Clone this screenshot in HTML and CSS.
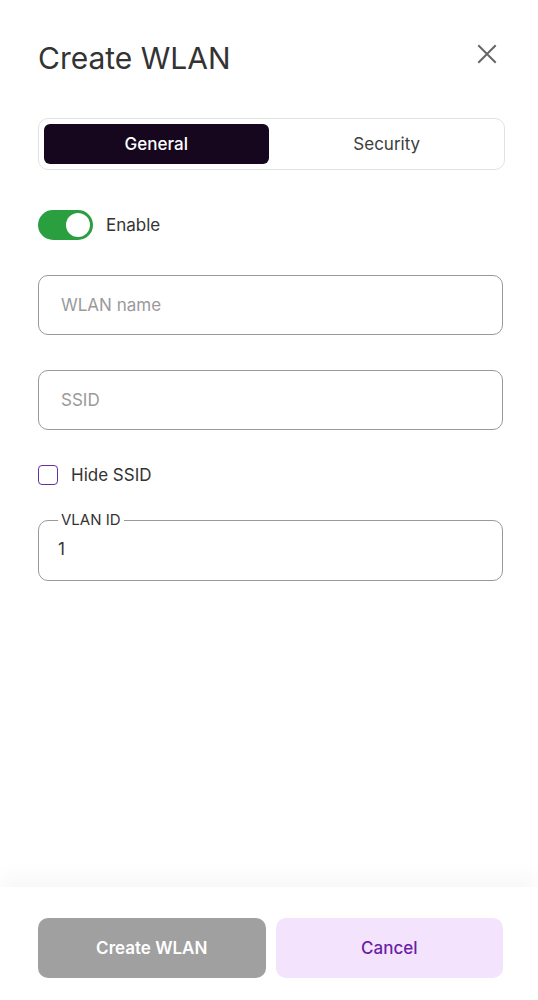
FILE: index.html
```html
<!DOCTYPE html>
<html lang="en">
<head>
<meta charset="utf-8">
<title>Create WLAN</title>
<link rel="stylesheet" href="styles.css">
</head>
<body>
<div class="dialog">
  <div class="content">
    <div class="header">
      <h1 class="title">Create WLAN</h1>
      <button class="close" aria-label="Close">
        <svg width="20" height="20" viewBox="0 0 20 20"><path d="M2 2 L18 18 M18 2 L2 18" stroke="#666" stroke-width="2" stroke-linecap="square" fill="none"/></svg>
      </button>
    </div>

    <div class="tabs">
      <div class="tab active">General</div>
      <div class="tab">Security</div>
    </div>

    <label class="toggle-row">
      <span class="toggle"><span class="knob"></span></span>
      <span class="toggle-label">Enable</span>
    </label>

    <div class="field"><input class="input" type="text" placeholder="WLAN name"></div>
    <div class="field"><input class="input" type="text" placeholder="SSID"></div>

    <label class="check-row">
      <span class="checkbox"></span>
      <span class="check-label">Hide SSID</span>
    </label>

    <fieldset class="outlined">
      <legend class="legend">VLAN ID</legend>
      <input class="outlined-input" type="text" value="1">
    </fieldset>
  </div>

  <div class="footer">
    <button class="btn btn-primary">Create WLAN</button>
    <button class="btn btn-cancel">Cancel</button>
  </div>
</div>
</body>
</html>
```

FILE: styles.css
```css
* { box-sizing: border-box; }
html, body { margin: 0; padding: 0; background: #fff; }
body {
  font-family: Inter, "Noto Sans", "Liberation Sans", sans-serif;
  color: #333;
}
.dialog {
  width: 538px;
  height: 1000px;
  display: flex;
  flex-direction: column;
}
.content {
  flex: 1;
  padding: 40px 35px 0 38px;
  display: flex;
  flex-direction: column;
}
.header {
  display: flex;
  justify-content: space-between;
  align-items: flex-start;
}
.title {
  margin: 0;
  font-size: 30px;
  line-height: 36px;
  font-weight: 400;
  color: #333;
}
.close {
  border: 0;
  background: none;
  padding: 0;
  margin: 4px 6px 0 0;
  width: 20px;
  height: 20px;
  cursor: pointer;
}
.close svg { display: block; }
.tabs {
  margin-top: 42px;
  margin-right: -2px;
  height: 52px;
  border: 1px solid #e2e2e2;
  border-radius: 10px;
  padding: 5px;
  display: grid;
  grid-template-columns: 1fr 1fr;
  gap: 6px;
}
.tab {
  display: flex;
  align-items: center;
  justify-content: center;
  font-size: 17px;
  font-weight: 400;
  color: #3d3d3d;
  border-radius: 6px;
}
.tab.active {
  background: #16071f;
  color: #fff;
  font-weight: 500;
}
.toggle-row {
  margin-top: 40px;
  display: flex;
  align-items: center;
  gap: 13px;
}
.toggle {
  width: 55px;
  height: 30px;
  border-radius: 15px;
  background: #2a9f40;
  display: flex;
  align-items: center;
  justify-content: flex-end;
  padding-right: 3px;
}
.knob {
  width: 24px;
  height: 24px;
  border-radius: 50%;
  background: #fff;
}
.toggle-label { font-size: 17px; color: #333; }
.field { margin-top: 35px; }
.input {
  display: block;
  width: 100%;
  height: 60px;
  border: 1px solid #999;
  border-radius: 10px;
  padding: 0 22px;
  font-family: inherit;
  font-size: 17px;
  color: #333;
  background: #fff;
  outline: none;
}
.input::placeholder { color: #9a9a9a; }
.check-row {
  margin-top: 35px;
  display: flex;
  align-items: center;
  gap: 13px;
  height: 20px;
}
.checkbox {
  width: 20px;
  height: 20px;
  border: 1.5px solid #6a2ea8;
  border-radius: 4px;
}
.check-label { font-size: 17px; color: #333; }
.outlined {
  margin: 27px 0 0 0;
  padding: 0 19px;
  height: 69px;
  border: 1px solid #999;
  border-radius: 10px;
}
.legend {
  padding: 0 3px;
  margin-left: 0;
  font-size: 15px;
  line-height: 16px;
  color: #333;
}
.outlined-input {
  display: block;
  width: 100%;
  border: 0;
  padding: 0;
  margin-top: 6px;
  height: 30px;
  font-family: inherit;
  font-size: 17px;
  color: #333;
  background: transparent;
  outline: none;
}
.footer {
  height: 113px;
  padding: 31px 35px 0 38px;
  display: grid;
  grid-template-columns: 1fr 1fr;
  column-gap: 10px;
  align-content: start;
  box-shadow: 0 -10px 22px rgba(0, 0, 0, 0.035);
  background: #fff;
}
.btn {
  height: 60px;
  border: 0;
  border-radius: 10px;
  font-family: inherit;
  font-size: 17px;
  cursor: pointer;
}
.btn-primary {
  background: #a0a0a0;
  color: #fff;
  font-weight: 600;
}
.btn-cancel {
  background: #f3e3fd;
  color: #6a1fa5;
  font-weight: 500;
}
```
